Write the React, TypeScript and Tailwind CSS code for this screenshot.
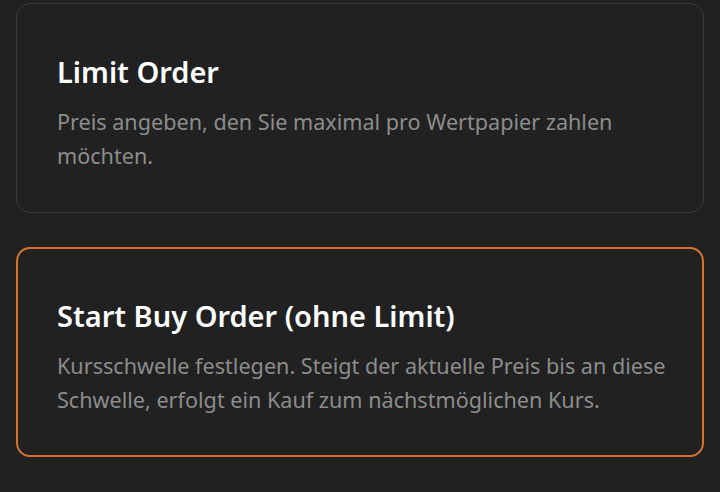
const options = [
  {
    title: "Limit Order",
    text: "Preis angeben, den Sie maximal pro Wertpapier zahlen möchten.",
    selected: false,
  },
  {
    title: "Start Buy Order (ohne Limit)",
    text: "Kursschwelle festlegen. Steigt der aktuelle Preis bis an diese Schwelle, erfolgt ein Kauf zum nächstmöglichen Kurs.",
    selected: true,
  },
]

export default function App() {
  return (
    <div
      className="min-h-[492px] w-[720px] bg-[#212121] px-[16px] pt-[3px] pb-8 flex flex-col gap-[34px]"
      style={{ fontFamily: '"Noto Sans", "Open Sans", sans-serif' }}
    >
      {options.map((o) => (
        <div
          key={o.title}
          className={
            o.selected
              ? "h-[210px] rounded-[14px] border-2 border-[#d4722e] pl-[39px] pr-[30px] pt-[49px]"
              : "h-[210px] rounded-[14px] border-[1.5px] border-[#3c3c3c] pl-[40px] pr-[30px] pt-[50px]"
          }
        >
          <h2 className="text-[29px] leading-[36px] font-semibold text-white">{o.title}</h2>
          <p className="mt-[15px] text-[21.6px] leading-[34px] text-[#8c8c8c]">{o.text}</p>
        </div>
      ))}
    </div>
  )
}
